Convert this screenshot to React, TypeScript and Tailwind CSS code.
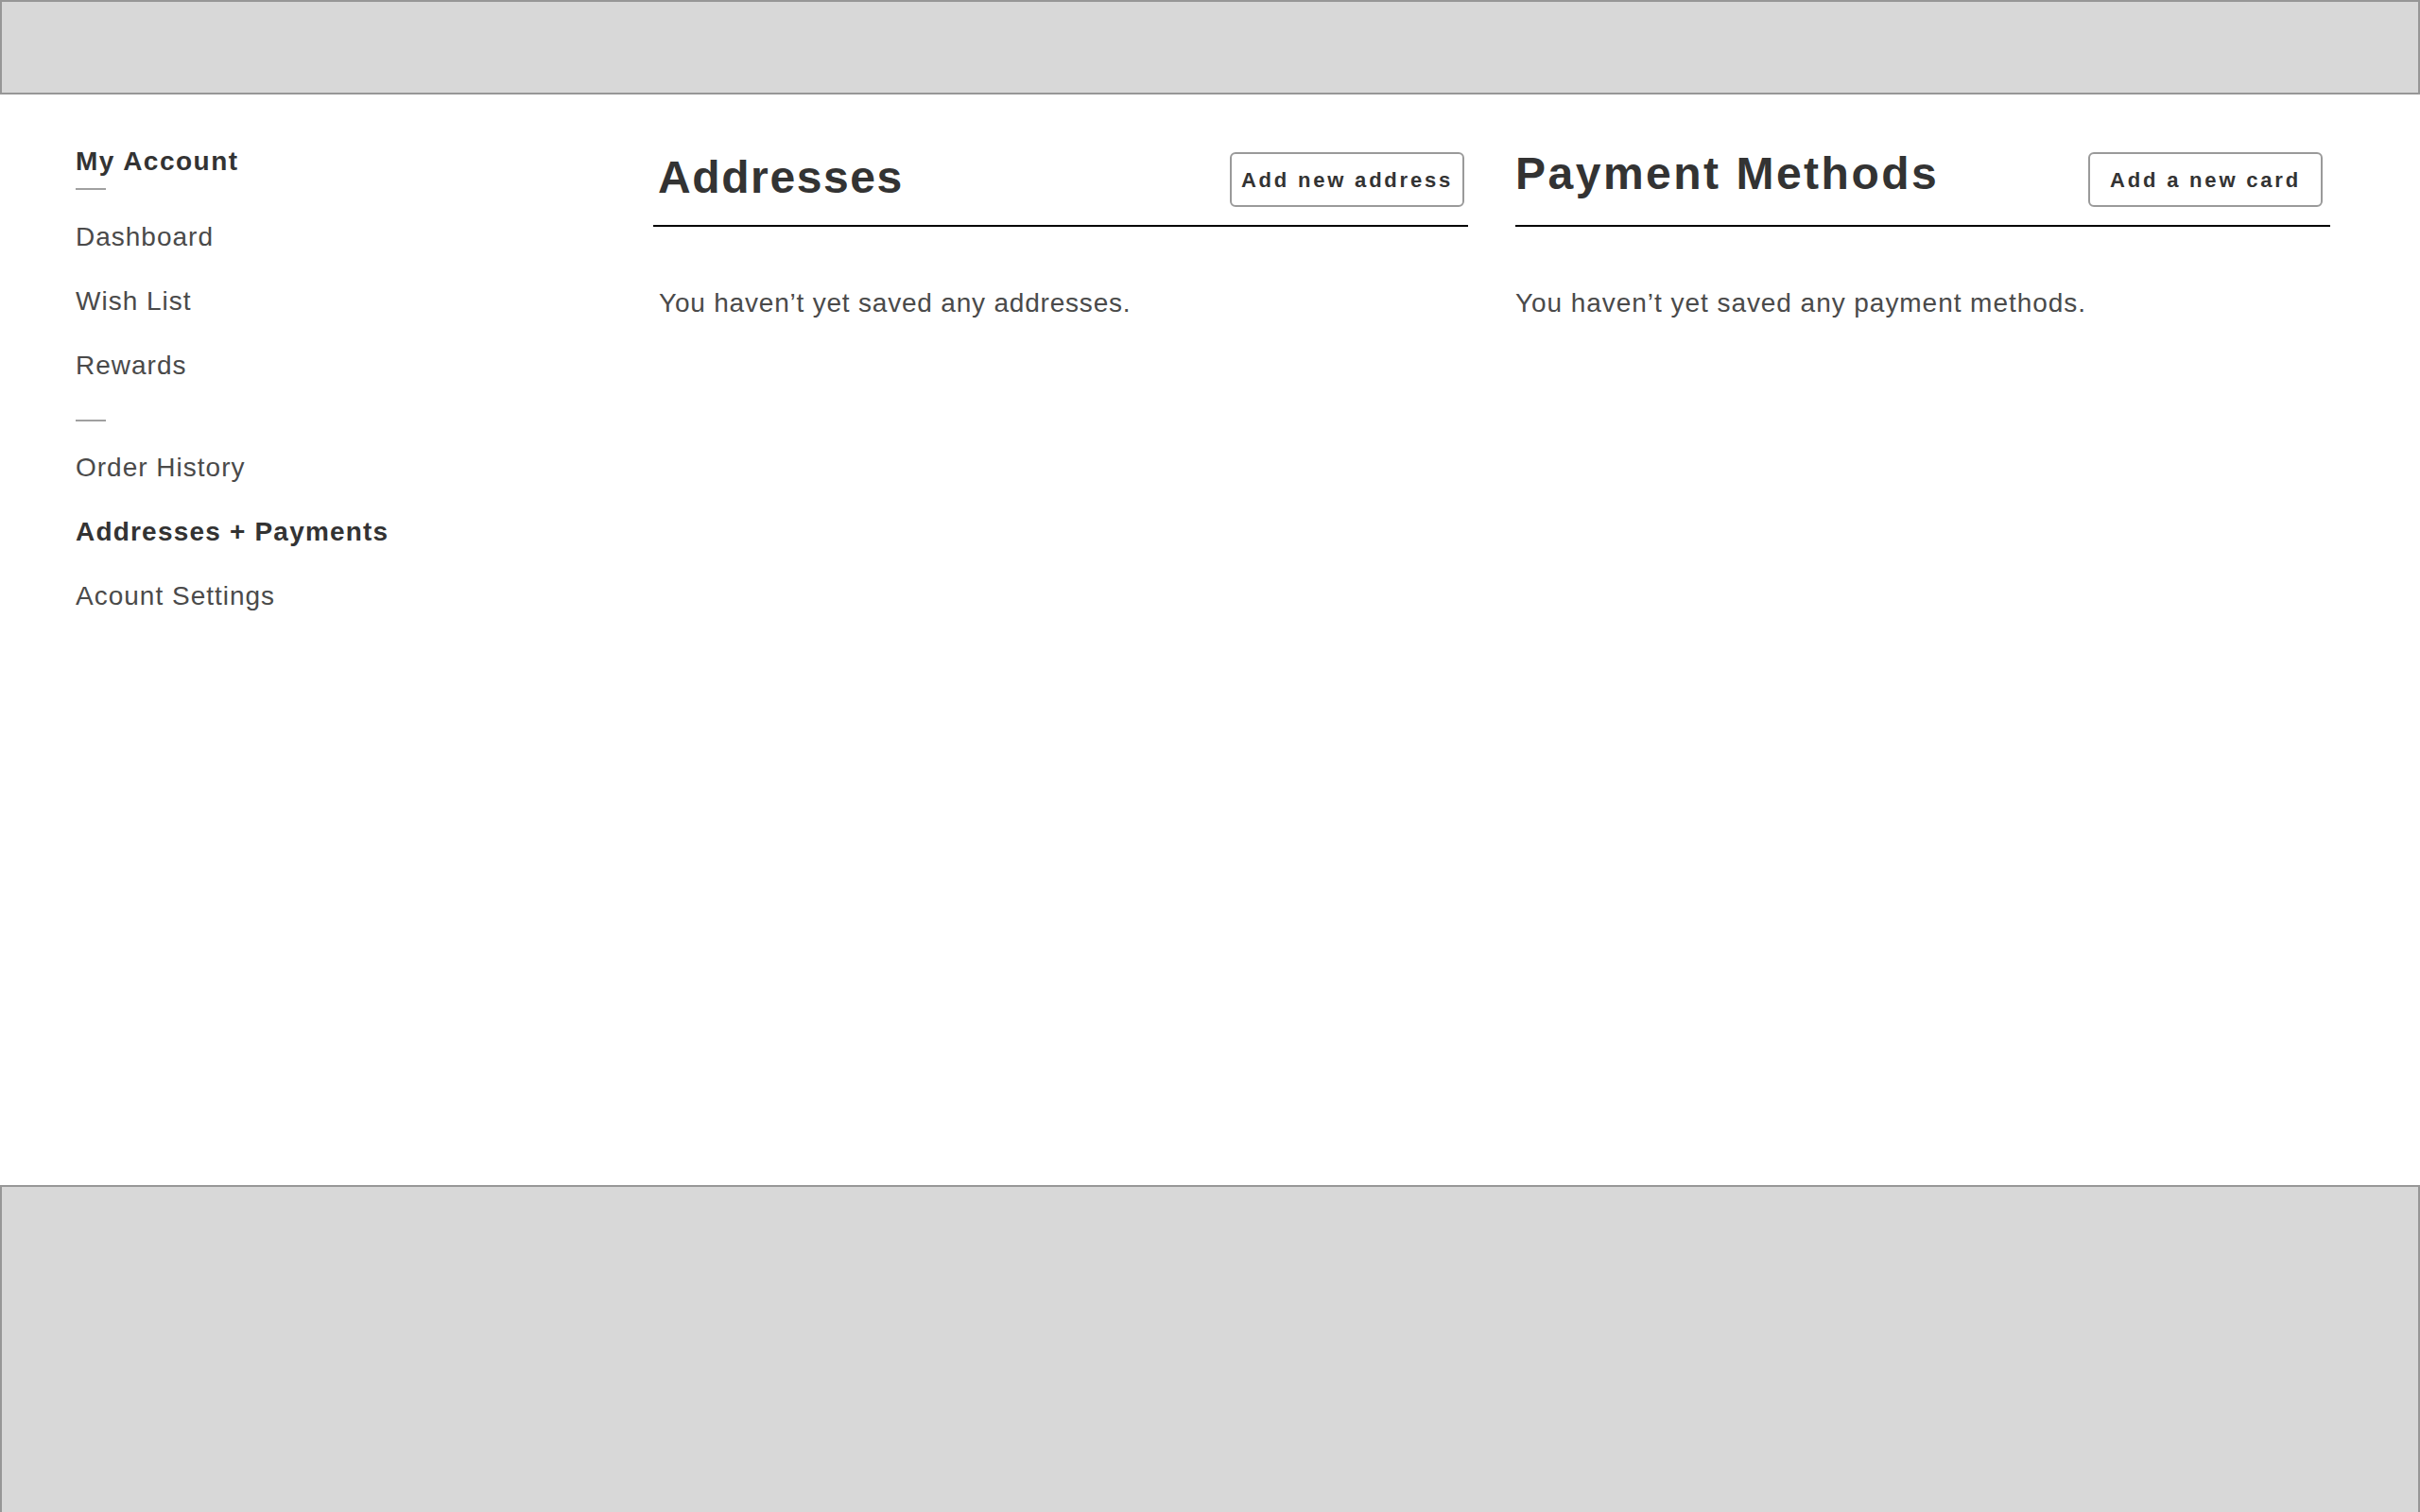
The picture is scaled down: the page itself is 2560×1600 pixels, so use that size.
import React from "react";

const font = { fontFamily: '"Liberation Sans", Arial, Helvetica, sans-serif' };

function NavItem({ label, active = false }: { label: string; active?: boolean }) {
  return (
    <div
      className={
        active
          ? "h-[68px] leading-[68px] text-[28px] font-bold tracking-[1.2px] text-[#333333]"
          : "h-[68px] leading-[68px] text-[28px] font-normal tracking-[1px] text-[#4a4a4a]"
      }
    >
      {label}
    </div>
  );
}

function Section({
  title,
  button,
  empty,
  headingClass,
  rowPad,
  textPad,
}: {
  title: string;
  button: string;
  empty: string;
  headingClass: string;
  rowPad: string;
  textPad: string;
}) {
  return (
    <section className="flex-1 min-w-0">
      <div className={"flex items-start justify-between border-b-2 border-black pb-[19px] " + rowPad}>
        <h2 className={"text-[48px] leading-[48px] font-bold text-[#333333] " + headingClass}>{title}</h2>
        <button className="h-[58px] w-[248px] rounded-[6px] border-2 border-[#9a9a9a] bg-white text-[22px] font-bold tracking-[2.8px] text-[#333333] flex items-center justify-center">
          {button}
        </button>
      </div>
      <p className={"mt-[64px] text-[28px] leading-[34px] text-[#4a4a4a] " + textPad}>{empty}</p>
    </section>
  );
}

export default function App() {
  return (
    <div className="min-h-screen h-[1600px] flex flex-col bg-white overflow-hidden" style={font}>
      <header className="h-[100px] shrink-0 bg-[#d8d8d8] border-2 border-[#979797]" />
      <main className="flex-1 flex pl-[80px] pr-[95px]">
        <aside className="w-[611px] shrink-0 pt-[54px]">
          <div className="text-[28px] leading-[34px] font-bold tracking-[1.5px] text-[#333333]">My Account</div>
          <div className="mt-[11px] h-[2px] w-[32px] bg-[#a0a0a0]" />
          <div className="mt-[16px]">
            <NavItem label="Dashboard" />
            <NavItem label="Wish List" />
            <NavItem label="Rewards" />
          </div>
          <div className="mt-[23px] h-[2px] w-[32px] bg-[#a0a0a0]" />
          <div className="mt-[15px]">
            <NavItem label="Order History" />
            <NavItem label="Addresses + Payments" active />
            <NavItem label="Acount Settings" />
          </div>
        </aside>
        <div className="flex-1 flex gap-[50px] pt-[61px]">
          <Section
            title="Addresses"
            button="Add new address"
            empty="You haven’t yet saved any addresses."
            headingClass="mt-[3px] tracking-[1.6px]"
            rowPad="pl-[5px] pr-[4px]"
            textPad="pl-[6px] tracking-[0.8px]"
          />
          <Section
            title="Payment Methods"
            button="Add a new card"
            empty="You haven’t yet saved any payment methods."
            headingClass="-mt-[1px] tracking-[2.5px]"
            rowPad="pl-[0px] pr-[8px]"
            textPad="pl-[0px] tracking-[0.95px]"
          />
        </div>
      </main>
      <footer className="h-[346px] shrink-0 bg-[#d8d8d8] border-t-2 border-l-2 border-r-2 border-[#979797]" />
    </div>
  );
}
